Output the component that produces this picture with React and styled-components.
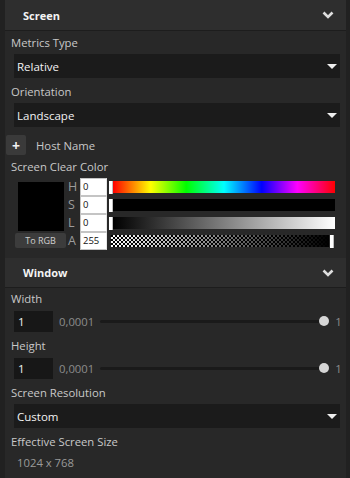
import styled, { createGlobalStyle } from 'styled-components';

const GlobalStyle = createGlobalStyle`
  html, body {
    margin: 0;
    padding: 0;
    background: #212121;
  }
  body {
    font-family: "Open Sans", "Noto Sans", sans-serif;
    font-size: 11.3px;
    color: #c8c8c8;
  }
`;

const Panel = styled.div`
  margin-left: 5px;
  width: 341px;
  height: 478px;
  background: #282828;
  overflow: hidden;
`;

const Section = styled.section`
  margin-top: ${(p) => p.$gap || 0}px;
`;

const Header = styled.div`
  display: flex;
  align-items: center;
  justify-content: space-between;
  height: ${(p) => p.$h || 30}px;
  box-sizing: border-box;
  padding: 0 12px 0 18px;
  background: #2e2e2e;
  border-bottom: 1px solid #1d1d1d;
  color: #f4f4f4;
  font-weight: 700;
  font-size: 11px;
`;

const Body = styled.div`
  padding-top: ${(p) => p.$pt || 3}px;
`;

const Label = styled.div`
  margin: ${(p) => p.$mt || 0}px 0 0 6px;
  line-height: 16px;
  height: 16px;
  color: #c8c8c8;
  white-space: nowrap;
`;

const Dropdown = styled.div`
  display: flex;
  align-items: center;
  justify-content: space-between;
  margin: 3px 0 0 9px;
  width: 326px;
  height: 24px;
  box-sizing: border-box;
  padding: 0 3px 0 3px;
  background: #1b1b1b;
  color: #f2f2f2;
  font-size: 11.5px;
`;

const Caret = styled.span`
  width: 0;
  height: 0;
  border-left: 5px solid transparent;
  border-right: 5px solid transparent;
  border-top: 5px solid #eeeeee;
`;

const HostRow = styled.div`
  display: flex;
  align-items: center;
  gap: 10px;
  margin: 8px 0 0 1px;
  height: 20px;
  color: #c8c8c8;
`;

const PlusButton = styled.div`
  width: 20px;
  height: 20px;
  border-radius: 2px;
  background: #3a3a3a;
  color: #f0f0f0;
  display: flex;
  align-items: center;
  justify-content: center;
  font-weight: 700;
  font-size: 14px;
`;

const ColorBlock = styled.div`
  display: flex;
  margin: 3px 0 0 10px;
`;

const SwatchCol = styled.div`
  display: flex;
  flex-direction: column;
  align-items: center;
  width: 51px;
  padding-top: 4px;
  gap: 2px;
`;

const Swatch = styled.div`
  width: 46px;
  height: 49px;
  background: #000;
`;

const SmallButton = styled.div`
  width: 51px;
  height: 15px;
  border-radius: 2px;
  background: #3c3c3c;
  color: #d0d0d0;
  font-size: 9px;
  line-height: 15px;
  text-align: center;
`;

const Rows = styled.div`
  display: flex;
  flex-direction: column;
  margin-left: 2px;
`;

const ChannelRow = styled.div`
  display: flex;
  align-items: center;
  height: 18px;
`;

const Letter = styled.span`
  width: 12px;
  color: #9c9c9c;
  font-size: 12.5px;
  line-height: 18px;
`;

const NumBox = styled.div`
  width: 27px;
  height: 18px;
  box-sizing: border-box;
  border: 1px solid #c4c4c4;
  border-right-color: #e8e8e8;
  background: #ffffff;
  color: #111;
  font-size: 9.5px;
  line-height: 16px;
  padding-left: 2px;
`;

const Track = styled.div`
  display: flex;
  align-items: center;
  width: 226px;
  margin-left: 2px;
  height: 18px;
`;

const Handle = styled.div`
  width: 4px;
  height: 13px;
  background: #ffffff;
  box-shadow: inset -1px 0 0 #bdbdbd;
  margin-left: ${(p) => p.$ml || 0}px;
`;

const Bar = styled.div`
  flex: ${(p) => (p.$w ? `0 0 ${p.$w}px` : 1)};
  margin-left: ${(p) => p.$ml || 0}px;
  height: 12px;
  background: ${(p) => p.$bg};
`;

const alphaBg =
  'linear-gradient(to right, rgba(0,0,0,0), rgba(0,0,0,0.45) 45%, #000 100%), ' +
  'repeating-conic-gradient(#ffffff 0% 25%, #000000 0% 50%) 0 0 / 4px 4px';

const NumberRow = styled.div`
  display: flex;
  align-items: center;
  margin: 4px 0 0 9px;
  height: 21px;
`;

const NumInput = styled.div`
  width: 39px;
  height: 21px;
  box-sizing: border-box;
  padding-left: 4px;
  background: #171717;
  color: #f2f2f2;
  line-height: 21px;
  font-size: 11.5px;
`;

const RangeText = styled.span`
  color: #8c8c8c;
  margin-left: ${(p) => p.$ml || 0}px;
`;

const SliderTrack = styled.div`
  position: relative;
  width: 224px;
  height: 3px;
  margin-left: 6px;
  background: #1a1a1a;
  border-radius: 2px;
`;

const Thumb = styled.div`
  position: absolute;
  right: -5px;
  top: -4px;
  width: 10px;
  height: 10px;
  border-radius: 50%;
  background: #d6d6d6;
`;

const InfoText = styled.div`
  margin: 5px 0 0 12px;
  color: #9a9a9a;
  line-height: 16px;
`;

const Chevron = () => (
  <svg width="12" height="8" viewBox="0 0 12 8">
    <path d="M1.5 1.5 L6 6 L10.5 1.5" fill="none" stroke="#dedede" strokeWidth="2.6" />
  </svg>
);

const channels = [
  { key: 'H', value: '0', bg: 'linear-gradient(to right, #ff0000, #ffff00 17%, #00ff00 33%, #00ffff 50%, #0000ff 67%, #ff00ff 83%, #ff0000)' },
  { key: 'S', value: '0', bg: '#000000' },
  { key: 'L', value: '0', bg: 'linear-gradient(to right, #000000, #ffffff)' },
];

const Select = ({ value }) => (
  <Dropdown>
    <span>{value}</span>
    <Caret />
  </Dropdown>
);

const NumberSlider = ({ value }) => (
  <NumberRow>
    <NumInput>{value}</NumInput>
    <RangeText $ml={6}>0,0001</RangeText>
    <SliderTrack>
      <Thumb />
    </SliderTrack>
    <RangeText $ml={11}>1</RangeText>
  </NumberRow>
);

const App = () => (
  <>
    <GlobalStyle />
    <Panel>
      <Section>
        <Header $h={31}>
          <span>Screen</span>
          <Chevron />
        </Header>
        <Body $pt={4}>
          <Label>Metrics Type</Label>
          <Select value="Relative" />
          <Label $mt={6}>Orientation</Label>
          <Select value="Landscape" />
          <HostRow>
            <PlusButton>+</PlusButton>
            <span>Host Name</span>
          </HostRow>
          <Label $mt={4}>Screen Clear Color</Label>
          <ColorBlock>
            <SwatchCol>
              <Swatch />
              <SmallButton>To RGB</SmallButton>
            </SwatchCol>
            <Rows>
              {channels.map((c) => (
                <ChannelRow key={c.key}>
                  <Letter>{c.key}</Letter>
                  <NumBox>{c.value}</NumBox>
                  <Track>
                    <Handle />
                    <Bar $bg={c.bg} />
                  </Track>
                </ChannelRow>
              ))}
              <ChannelRow>
                <Letter>A</Letter>
                <NumBox>255</NumBox>
                <Track>
                  <Bar $w={218} $ml={2} $bg={alphaBg} />
                  <Handle $ml={1} />
                </Track>
              </ChannelRow>
            </Rows>
          </ColorBlock>
        </Body>
      </Section>
      <Section $gap={8}>
        <Header>
          <span>Window</span>
          <Chevron />
        </Header>
        <Body>
          <Label>Width</Label>
          <NumberSlider value="1" />
          <Label $mt={6}>Height</Label>
          <NumberSlider value="1" />
          <Label $mt={6}>Screen Resolution</Label>
          <Select value="Custom" />
          <Label $mt={6}>Effective Screen Size</Label>
          <InfoText>1024 x 768</InfoText>
        </Body>
      </Section>
    </Panel>
  </>
);

export default App;
